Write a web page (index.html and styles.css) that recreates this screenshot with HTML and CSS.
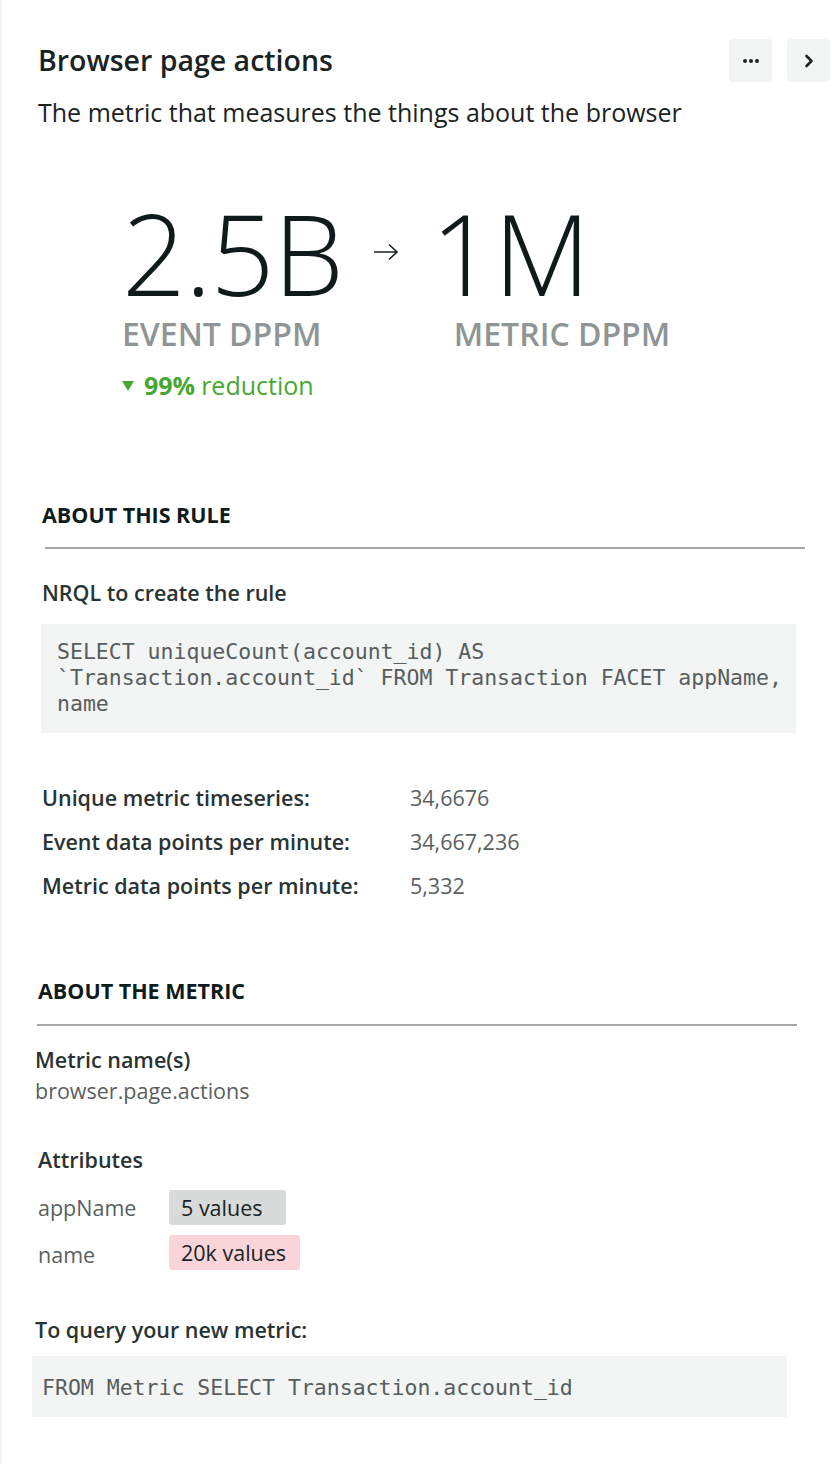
FILE: index.html
```html
<!DOCTYPE html>
<html lang="en">
<head>
<meta charset="utf-8">
<title>Browser page actions</title>
<link rel="stylesheet" href="styles.css">
</head>
<body>
<div class="panel">
  <header class="header">
    <h1 class="title">Browser page actions</h1>
    <div class="actions">
      <button class="icon-btn" aria-label="More">
        <svg width="18" height="6" viewBox="0 0 18 6"><circle cx="3" cy="3" r="2" fill="#1d2626"/><circle cx="9" cy="3" r="2" fill="#1d2626"/><circle cx="15" cy="3" r="2" fill="#1d2626"/></svg>
      </button>
      <button class="icon-btn" aria-label="Next">
        <svg width="10" height="14" viewBox="0 0 10 14"><path d="M2.5 2 L7.5 7 L2.5 12" fill="none" stroke="#1d2626" stroke-width="2.6" stroke-linecap="round" stroke-linejoin="round"/></svg>
      </button>
    </div>
  </header>
  <p class="subtitle">The metric that measures the things about the browser</p>

  <section class="metrics">
    <div class="metric-row">
      <div class="metric-col">
        <div class="big">2.5B</div>
        <div class="unit">EVENT DPPM</div>
      </div>
      <div class="arrow">
        <svg width="26" height="18" viewBox="0 0 26 18"><path d="M1 9 H24 M16 1.5 L24 9 L16 16.5" fill="none" stroke="#1b2424" stroke-width="1.6"/></svg>
      </div>
      <div class="metric-col">
        <div class="big">1M</div>
        <div class="unit unit-2">METRIC DPPM</div>
      </div>
    </div>
    <div class="reduction">
      <svg class="tri" width="12" height="10" viewBox="0 0 12 10"><path d="M0 0 H12 L6 10 Z" fill="#46a832"/></svg>
      <strong>99%</strong> reduction
    </div>
  </section>

  <section class="rule">
    <h2 class="section-h h-rule">ABOUT THIS RULE</h2>
    <hr class="divider div-rule">
    <h3 class="label nrql-label">NRQL to create the rule</h3>
    <pre class="code code-rule">SELECT uniqueCount(account_id) AS
`Transaction.account_id` FROM Transaction FACET appName,
name</pre>
    <div class="stats">
      <div class="stat-label">Unique metric timeseries:</div><div class="stat-value">34,6676</div>
      <div class="stat-label">Event data points per minute:</div><div class="stat-value">34,667,236</div>
      <div class="stat-label">Metric data points per minute:</div><div class="stat-value">5,332</div>
    </div>
  </section>

  <section class="metric">
    <h2 class="section-h h-metric">ABOUT THE METRIC</h2>
    <hr class="divider div-metric">
    <h3 class="label names-label">Metric name(s)</h3>
    <div class="names-value">browser.page.actions</div>
    <h3 class="label attr-label">Attributes</h3>
    <div class="attrs">
      <div class="attr-name">appName</div><div><span class="badge badge-grey">5 values</span></div>
      <div class="attr-name attr-lower">name</div><div><span class="badge badge-pink">20k values</span></div>
    </div>
    <h3 class="label query-label">To query your new metric:</h3>
    <pre class="code code-query">FROM Metric SELECT Transaction.account_id</pre>
  </section>
</div>
</body>
</html>
```
FILE: styles.css
```css
* { box-sizing: border-box; }
html, body { margin: 0; padding: 0; background: #ffffff; }
body {
  font-family: "Open Sans", "Noto Sans", sans-serif;
  color: #1c2626;
  width: 832px;
  height: 1464px;
  overflow: hidden;
}
.panel {
  border-left: 2px solid #f2f3f3;
  padding-left: 36px;
  min-height: 1464px;
}
.header {
  display: flex;
  justify-content: space-between;
  align-items: flex-start;
  padding-top: 39px;
}
.title {
  margin: 3px 0 0 0;
  font-size: 28.5px;
  line-height: 36px;
  font-weight: 600;
  color: #1a2323;
}
.actions {
  display: flex;
  gap: 15px;
  padding-right: 2px;
}
.icon-btn {
  width: 43px;
  height: 43px;
  border: none;
  border-radius: 4px;
  background: #f3f4f4;
  display: flex;
  align-items: center;
  justify-content: center;
  padding: 0;
}
.subtitle {
  margin: 14px 0 0 0;
  font-size: 25px;
  line-height: 32px;
  font-weight: 400;
  color: #1a2323;
}
.metrics {
  margin-top: 69px;
  margin-left: 84px;
}
.metric-row {
  display: flex;
  align-items: flex-start;
}
.big {
  font-size: 112px;
  line-height: 112px;
  font-weight: 300;
  color: #0f1a1a;
  letter-spacing: -1px;
}
.arrow {
  margin: 46px 32px 0 30px;
  height: 18px;
}
.unit {
  margin-top: 5px;
  font-size: 32px;
  line-height: 40px;
  font-weight: 600;
  color: #8f9595;
}
.unit-2 { margin-left: 23px; }
.reduction {
  margin-top: 15px;
  font-size: 25px;
  line-height: 32px;
  color: #46a832;
  display: flex;
  align-items: center;
}
.reduction .tri { margin-right: 10px; margin-top: 2px; }
.reduction strong { font-weight: 700; margin-right: 6px; }
.section-h {
  margin: 0;
  font-size: 21.5px;
  line-height: 28px;
  font-weight: 700;
  color: #0f1a1a;
}
.h-rule { margin-top: 100px; margin-left: 4px; }
.divider {
  border: none;
  height: 2px;
  background: #a6a8a8;
  width: 760px;
  margin: 0;
}
.div-rule { margin-top: 18px; margin-left: 7px; }
.label {
  margin: 0;
  font-size: 21.5px;
  line-height: 28px;
  font-weight: 600;
  color: #2a3333;
}
.nrql-label { margin-top: 30px; margin-left: 4px; }
.code {
  margin: 0;
  background: #f3f4f4;
  font-family: "DejaVu Sans Mono", "Liberation Mono", monospace;
  font-size: 21.5px;
  line-height: 26px;
  color: #575d5d;
  white-space: pre;
  overflow: hidden;
  width: 755px;
}
.code-rule {
  margin-top: 17px;
  margin-left: 3px;
  padding: 15px 10px 16px 16px;
}
.stats {
  margin-top: 51px;
  margin-left: 4px;
  display: grid;
  grid-template-columns: 368px auto;
  row-gap: 16px;
  font-size: 21.5px;
  line-height: 28px;
}
.stat-label { font-weight: 600; color: #2a3333; }
.stat-value { color: #5a6060; }
.h-metric { margin-top: 77px; }
.div-metric { margin-top: 19px; margin-left: -1px; }
.names-label { margin-top: 20px; margin-left: -3px; }
.names-value {
  margin-top: 3px;
  margin-left: -3px;
  font-size: 21.5px;
  line-height: 28px;
  color: #5a6060;
}
.attr-label { margin-top: 41px; }
.attrs {
  margin-top: 16px;
  display: grid;
  grid-template-columns: 131px auto;
  row-gap: 10px;
  align-items: center;
  font-size: 21.5px;
}
.attr-name { color: #5a6060; line-height: 28px; }
.attr-lower { margin-top: 5px; }
.badge {
  display: inline-block;
  height: 35px;
  line-height: 35px;
  padding: 0 14px 0 12px;
  border-radius: 3px;
  color: #1a2323;
  font-size: 21.5px;
}
.badge-grey { background: #d9dada; min-width: 117px; }
.badge-pink { background: #f9d5da; }
.query-label { margin-top: 46px; margin-left: -3px; }
.code-query {
  margin-top: 12px;
  margin-left: -6px;
  padding: 19px 10px 16px 10px;
}
```
